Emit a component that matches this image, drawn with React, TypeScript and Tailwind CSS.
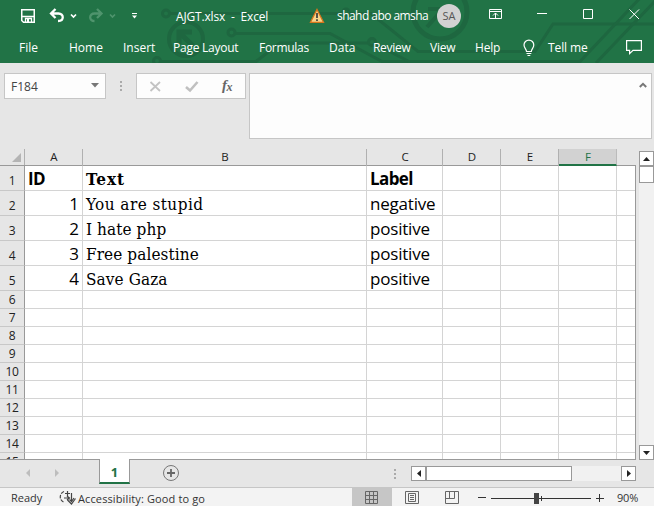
import React from "react";

const menu = [
  { t: "File", c: "w-[50px]" },
  { t: "Home", c: "w-[54px]" },
  { t: "Insert", c: "w-[50px]" },
  { t: "Page Layout", c: "w-[86px] tracking-[-0.25px]" },
  { t: "Formulas", c: "w-[70px] tracking-[-0.3px]" },
  { t: "Data", c: "w-[44px]" },
  { t: "Review", c: "w-[57px] tracking-[-0.3px]" },
  { t: "View", c: "w-[45px] tracking-[-0.2px]" },
  { t: "Help", c: "w-[48px] tracking-[-0.2px]" },
];

const columns = [
  { t: "A", c: "w-[58px]" },
  { t: "B", c: "w-[284px]" },
  { t: "C", c: "w-[76px]" },
  { t: "D", c: "w-[58px]" },
  { t: "E", c: "w-[58px]" },
  { t: "F", c: "w-[58px]" },
];

const data = [
  ["ID", "Text", "Label"],
  ["1", "You are stupid", "negative"],
  ["2", "I hate php", "positive"],
  ["3", "Free palestine", "positive"],
  ["4", "Save Gaza", "positive"],
];

function cellFont(row: number, col: number) {
  if (col === 1) {
    const serif = "font-['DejaVu_Serif_Condensed','DejaVu_Serif',serif]";
    if (row === 0) return `${serif} font-bold tracking-[0.9px]`;
    if (row === 1) return `${serif} tracking-[0.45px]`;
    return `${serif} tracking-[0.1px]`;
  }
  if (row === 0) return "font-bold tracking-[-0.6px]";
  if (col === 0) return "text-right";
  return "tracking-[-0.2px]";
}

function Circuit() {
  return (
    <svg className="absolute inset-0" width="654" height="63" fill="none" stroke="#1e6740" strokeWidth="3">
      <circle cx="166" cy="13.500" r="3.500" />
      <path d="M170 13.500H342M350 13.500H371L418 51.500H535L553 24H654" />
      <circle cx="346" cy="12" r="3" />
      <circle cx="186" cy="39" r="17" strokeWidth="4" />
      <path d="M193 46L180 33M179 44V32H192" strokeWidth="5" />
      <circle cx="157" cy="61" r="3.500" />
      <path d="M161 61.500H256L280 43H368" />
      <circle cx="231.500" cy="32.500" r="3.500" />
      <path d="M235 33.500H330L382 61.500H580L641 -3M596 63L656 0" />
      <circle cx="372" cy="42" r="3.500" />
      <path d="M375 44L408 61" />
      <circle cx="440" cy="12" r="27" strokeWidth="5" />
      <path d="M427 27L442 10M428 9H443V24" strokeWidth="4" />
    </svg>
  );
}

function Header() {
  return (
    <header className="relative h-[63px] shrink-0 bg-[#217346] text-[12px] text-white">
      <Circuit />
      <div className="relative flex h-8 items-center">
        <svg width="176" height="32" fill="none" stroke="#fff" className="shrink-0">
          <path d="M21.750 9.750H34.250V22.250H23.500L21.750 20.500Z" strokeWidth="1.500" />
          <path d="M22 16.500H34M25.500 22V18.500H31.500V22" strokeWidth="1.300" />
          <path d="M28 19V22" strokeWidth="2" />
          <path d="M55.500 9L51 13.500L55.500 18M51.500 13.500H58.500C64 13.500 64.500 21 58 21" strokeWidth="2.300" />
          <path d="M71 14.500L73.500 17L76 14.500" strokeWidth="1.700" />
          <g stroke="#4f946d">
            <path d="M97 9L101.500 13.500L97 18M101 13.500H94.500C89 13.500 88.500 21 94.500 21" strokeWidth="2.300" />
            <path d="M110 14.500L112.500 17L115 14.500" strokeWidth="1.700" />
          </g>
          <path d="M132 13.500H137" />
          <path d="M132 15.500H137L134.500 18.500Z" fill="#fff" stroke="none" />
        </svg>
        <span className="w-[133px] shrink-0 pt-[2px] tracking-[-0.17px] whitespace-pre">AJGT.xlsx  -  Excel</span>
        <svg width="28" height="32" className="shrink-0">
          <path d="M8 9.500L14.500 22.300H1.500Z" fill="#f7d58a" stroke="#d8751c" strokeWidth="1.300" />
          <path d="M8 13V18M8 19.300V21" stroke="#3b3b3b" strokeWidth="1.700" />
        </svg>
        <span className="w-[100px] shrink-0 tracking-[-0.55px] whitespace-pre">shahd abo amsha</span>
        <span className="flex size-6 shrink-0 items-center justify-center rounded-full bg-[#d2d2d2] text-[11px] text-[#555]">SA</span>
        <svg width="193" height="32" fill="none" stroke="#fff" className="shrink-0">
          <path d="M28.500 9.500H40.500V18.500H28.500ZM28.500 11.500H40.500M34.500 18V13M32 15.500L34.500 13L37 15.500" />
          <path d="M76 13.500H86M122.500 9.500H131.500V18.500H122.500ZM168.500 9.500L178 19M178 9.500L168.500 19" />
        </svg>
      </div>
      <nav className="relative flex h-[31px] items-center pl-[19px]">
        {menu.map((m) => (
          <span key={m.t} className={`${m.c} shrink-0 whitespace-pre`}>{m.t}</span>
        ))}
        <svg width="25" height="20" fill="none" stroke="#fff" strokeWidth="1.200" className="shrink-0">
          <path d="M3.500 13.500C3.500 11 1 10 1 7A4.900 4.900 0 0 1 10.800 7C10.800 10 8.300 11 8.300 13.500ZM3.500 15.500H8.300M4.500 17.500H7.300" />
        </svg>
        <span className="w-[78px] tracking-[-0.1px]">Tell me</span>
        <svg width="18" height="18" fill="none" stroke="#fff" strokeWidth="1.200">
          <path d="M.600 1.600H15.400V11.400H7L3.600 14.600V11.400H.600Z" />
        </svg>
      </nav>
    </header>
  );
}

function Dots() {
  return (
    <div className="flex flex-col gap-[2px]">
      <i className="size-[2px] bg-[#aaa]" />
      <i className="size-[2px] bg-[#aaa]" />
      <i className="size-[2px] bg-[#aaa]" />
    </div>
  );
}

function FormulaBar() {
  return (
    <div className="flex h-[86px] shrink-0 items-start pt-[10px] pl-1">
      <div className="flex h-[26px] w-[102px] items-center justify-between border border-[#c6c6c6] bg-[#fdfdfd] px-[6px] pt-px text-[12px] text-[#444]">
        <span>F184</span>
        <svg width="8" height="5" className="-mt-[3px]"><path d="M0 0H8L4 4.500Z" fill="#777" /></svg>
      </div>
      <div className="flex h-[26px] w-[30px] items-center justify-center"><Dots /></div>
      <div className="flex h-[26px] w-[110px] border border-[#c6c6c6] bg-[#fdfdfd]">
        <svg width="108" height="24" fill="none">
          <path d="M13.500 8L23 17M23 8L13.500 17" stroke="#c3c3c3" strokeWidth="1.800" />
          <path d="M49 13L53 16.500L60.500 8" stroke="#c0c0c0" strokeWidth="2.600" />
          <text x="85" y="16" fill="#666" fontSize="15" fontWeight="bold" fontStyle="italic" fontFamily="Liberation Serif, serif">f</text>
          <text x="89.500" y="17" fill="#666" fontSize="12" fontWeight="bold" fontStyle="italic" fontFamily="Liberation Serif, serif">x</text>
        </svg>
      </div>
      <div className="ml-[3px] flex h-[66px] w-[403px] justify-end border border-[#c6c6c6] bg-[#fdfdfd] pt-2 pr-1">
        <svg width="8" height="6" fill="none"><path d="M.800 5L4 1.800L7.200 5" stroke="#777" strokeWidth="2" /></svg>
      </div>
    </div>
  );
}

function Sheet() {
  return (
    <div className="flex h-[311px] w-[636px] flex-col">
      <div className="flex h-[17px] shrink-0 border-b border-[#999] text-[11.500px] leading-[15px] text-[#222]">
        <div className="flex w-[25px] items-end justify-end border-r border-[#b0b0b0] pr-[3px] pb-[3px]">
          <svg width="9" height="9"><path d="M9 0V9H0Z" fill="#b4b4b4" /></svg>
        </div>
        {columns.map((c) => (
          <div key={c.t} className={`${c.c} h-[17px] shrink-0 border-r pl-px text-center ${c.t === "F" ? "border-b-2 border-r-[#bbb] border-b-[#217346] bg-[#d2d2d2] text-[#217346]" : "border-[#b0b0b0]"}`}>
            {c.t}
          </div>
        ))}
      </div>
      <div className="min-h-0 flex-1 overflow-hidden border-r border-b border-[#999] bg-white">
        {Array.from({ length: 15 }, (_, r) => (
          <div key={r} className={`flex ${r < 5 ? "h-[25px]" : "h-[18px]"}`}>
            <div className={`w-[25px] shrink-0 border-r border-b border-r-[#999] border-b-[#c8c8c8] bg-[#e6e6e6] text-center text-[12px] tracking-[-0.3px] text-[#222] ${r < 5 ? "pt-[3px] leading-[24px]" : "leading-[18px]"}`}>
              {r + 1}
            </div>
            {columns.map((c, i) => (
              <div key={c.t} className={`${c.c} shrink-0 overflow-hidden border-r border-b border-[#d4d4d4] px-[3px] text-[17px] leading-[26px] whitespace-pre text-black ${cellFont(r, i)}`}>
                {data[r]?.[i]}
              </div>
            ))}
            <div className="w-[20px] shrink-0 border-b border-[#d4d4d4]" />
          </div>
        ))}
      </div>
    </div>
  );
}

function Tabs() {
  return (
    <div className="flex h-[27px] shrink-0">
      <svg width="99" height="27"><path d="M30 9V17L26 13ZM55 9V17L59 13Z" fill="#bdbdbd" /></svg>
      <div className="-mt-px h-[25px] w-[31px] border-x border-b-2 border-x-[#999] border-b-[#217346] bg-white text-center text-[13px] leading-[26px] font-bold text-[#217346]">1</div>
      <svg width="263" height="27" fill="none">
        <circle cx="41" cy="13" r="7.500" stroke="#777" />
        <path d="M41 9V17M37 13H45" stroke="#666" strokeWidth="1.800" />
      </svg>
      <div className="flex h-[27px] w-[18px] items-center pl-[1px]"><Dots /></div>
      <div className="mt-[6px] flex h-[15px] w-[225px] bg-[#f1f1f1]">
        <div className="flex w-[15px] items-center justify-center border border-[#999] bg-white"><svg width="4" height="7"><path d="M4 0V7L0 3.500Z" fill="#222" /></svg></div>
        <div className="w-[146px] border border-[#999] bg-white" />
        <div className="ml-auto flex w-[15px] items-center justify-center border border-[#999] bg-white"><svg width="4" height="7"><path d="M0 0V7L4 3.500Z" fill="#222" /></svg></div>
      </div>
    </div>
  );
}

function StatusBar() {
  return (
    <footer className="flex h-[20px] shrink-0 items-center border-t border-[#c6c6c6] bg-[#f3f3f3] text-[11px] text-[#333]">
      <span className="w-[49px] shrink-0 pt-[2px] pl-[11px]">Ready</span>
      <svg width="29" height="19" fill="none" stroke="#444" strokeWidth="1.200" className="shrink-0">
        <path d="M15 3.500A5.800 5.800 0 0 0 15.500 14.500" strokeDasharray="3.500 1.300" />
        <path d="M18.500 3V8M16 5.500H21M22.500 5V8M15 10H20M18 8L20.500 10L18 12" />
        <path d="M22.500 8V14M18.500 12L22.500 16L26.500 10.500M20.500 11.500L22.500 13.500L25 10" />
      </svg>
      <span className="w-[274px] shrink-0 pt-[3px] tracking-[0.12px] whitespace-pre">Accessibility: Good to go</span>
      <svg width="265" height="19" fill="none" stroke="#666" className="shrink-0">
        <rect width="40" height="19" fill="#c6c6c6" stroke="none" />
        <path d="M13.500 3.500H25.500V15.500H13.500ZM17.500 3.500V15.500M21.500 3.500V15.500M13.500 7.500H25.500M13.500 11.500H25.500" />
        <path d="M53.500 3.500H66.500V15.500H53.500ZM56.500 5.500H63.500V13.500H56.500ZM58 7.500H62M58 9.500H62M58 11.500H62" />
        <path d="M93.500 3.500H106.500V15.500H93.500ZM97.500 3.500V10.500M93.500 10.500H102.500V3.500" />
        <path d="M126 9.500H134M139 10.500H239M244 10.500H252M247.500 6V14M189.500 8V13" stroke="#333" />
        <rect x="182" y="5" width="5" height="11" fill="#444" stroke="none" />
      </svg>
      <span className="pt-[2px] tracking-[-0.2px]">90%</span>
    </footer>
  );
}

export default function App() {
  return (
    <main className="flex h-[506px] w-[654px] flex-col overflow-hidden bg-[#e6e6e6] font-['Open_Sans','Noto_Sans',sans-serif]">
      <Header />
      <FormulaBar />
      <div className="flex h-[311px] shrink-0">
        <Sheet />
        <div className="ml-[3px] flex w-[15px] flex-col bg-[#f1f1f1]">
          <div className="h-[2px] bg-[#e6e6e6]" />
          <div className="flex h-[15px] items-center justify-center border border-[#999] bg-white"><svg width="7" height="4"><path d="M0 4H7L3.500 0Z" fill="#222" /></svg></div>
          <div className="h-[17px] border border-[#999] bg-white" />
          <div className="mt-auto flex h-[15px] items-center justify-center border border-[#999] bg-white"><svg width="7" height="4"><path d="M0 0H7L3.500 4Z" fill="#222" /></svg></div>
        </div>
      </div>
      <Tabs />
      <StatusBar />
    </main>
  );
}
